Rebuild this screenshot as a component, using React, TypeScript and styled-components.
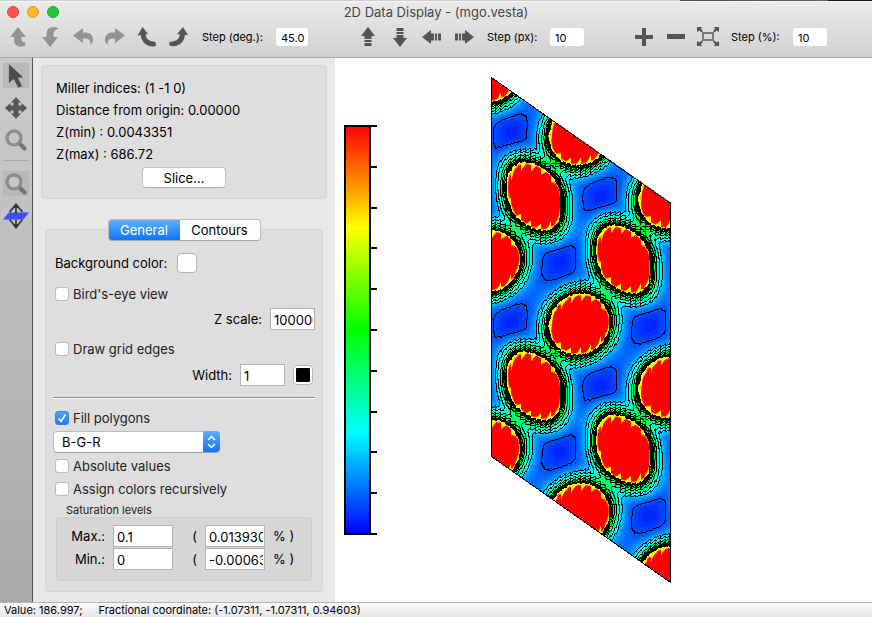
import React from "react";
import styled, { createGlobalStyle } from "styled-components";

const GlobalStyle = createGlobalStyle`
  * { box-sizing: border-box; }
  body {
    margin: 0;
    font-family: Inter, "Liberation Sans", Arial, sans-serif;
    font-size: 13px;
    color: #000;
  }
  button, input, select { font: inherit; color: inherit; margin: 0; }
`;

/* ---------- density map ---------- */

type Point = [number, number];

const MAP_W = 180;
const EDGE_DROP = 126;
const SIDE_H = 380;
const LATTICE: Point = [89.5, 63.2];
const REPEAT = 189.6;

const latticeSites = ([x0, y0]: Point): Point[] => {
  const sites: Point[] = [];
  for (let i = -2; i <= 3; i++) {
    for (let j = -4; j <= 5; j++) {
      const x = x0 + i * LATTICE[0];
      const y = y0 + i * LATTICE[1] + j * REPEAT;
      if (x > -60 && x < 240 && y > -60 && y < 570) sites.push([x, y]);
    }
  }
  return sites;
};

const hexAtoms = latticeSites([43, 119]);
const roundAtoms = latticeSites([88, 247]);
const voids = [...latticeSites([68, 185]), ...latticeSites([109, 119])];

const PROFILE: Point[] = [
  [0, 4], [25, 1.5], [28, 0.9], [29, 0.58], [33, 0.36], [37, 0.24], [41, 0.12], [45, 0.04], [50, 0.01], [53, 0],
];

const falloff = (r: number) => {
  for (let k = 1; k < PROFILE.length; k++) {
    const [r1, v1] = PROFILE[k];
    if (r < r1) {
      const [r0, v0] = PROFILE[k - 1];
      return v0 + ((v1 - v0) * (r - r0)) / (r1 - r0);
    }
  }
  return 0;
};

const density = (x: number, y: number) => {
  let base = 0.155;
  for (const [cx, cy] of voids) {
    const dx = x - cx;
    const dy = y - cy + 0.2 * dx;
    const d = Math.pow(Math.pow(Math.abs(dx) / 21, 3) + Math.pow(Math.abs(dy) / 21, 3), 1 / 3);
    base -= 0.12 * Math.exp(-0.7 * d * d);
  }
  let squares = 0;
  for (const [cx, cy] of hexAtoms) {
    const dx = x - cx;
    const dy = y - cy - 0.3 * dx;
    squares += falloff(29 * Math.pow(Math.pow(Math.abs(dx) / 26, 2.3) + Math.pow(Math.abs(dy) / 31, 2.3), 1 / 2.3)) ** 2;
  }
  for (const [cx, cy] of roundAtoms) {
    const dx = x - cx;
    const dy = y - cy + 0.1 * dx;
    squares += falloff(Math.hypot(dx, dy)) ** 2;
  }
  return base + Math.sqrt(squares);
};

const STEP_X = LATTICE[0] / 18;
const STEP_SHEAR = LATTICE[1] / 18;
const STEP_Y = REPEAT / 48;
const nodeCache = new Map<string, number>();
const node = (i: number, j: number) => {
  const key = i + "," + j;
  let v = nodeCache.get(key);
  if (v === undefined) {
    v = density(i * STEP_X, i * STEP_SHEAR + j * STEP_Y);
    nodeCache.set(key, v);
  }
  return v;
};

const interpolate = (x: number, y: number) => {
  const u = x / STEP_X;
  const w = (y - u * STEP_SHEAR) / STEP_Y;
  const i = Math.floor(u);
  const j = Math.floor(w);
  const fu = u - i;
  const fw = w - j;
  return (
    node(i, j) * (1 - fu) * (1 - fw) +
    node(i + 1, j) * fu * (1 - fw) +
    node(i, j + 1) * (1 - fu) * fw +
    node(i + 1, j + 1) * fu * fw
  );
};

const sawtooth = (t: number, height: number) => (t - Math.floor(t) - 0.5) * height;

const sample = (x: number, y: number) => {
  const plain = interpolate(x, y);
  if (plain < 0.18) return plain;
  const fine = interpolate(x, y + sawtooth(x / STEP_X, plain < 0.42 ? 2 : 4));
  if (plain < 0.68) return Math.min(fine, 0.74);
  return Math.max(0.74, Math.min(plain, interpolate(x, y + sawtooth(x / (STEP_X * 2), 12))));
};

const LEVELS = [0.08, 0.2, 0.27, 0.36, 0.43, 0.49, 0.54, 0.58, 0.62, 0.66, 0.7];
const SHADES = 80;
const bandOf = (v: number) => LEVELS.filter((l) => v > l).length;

const shadeColor = (s: number) => {
  const t = (s / SHADES) * 4;
  const up = Math.round((t % 1) * 255);
  if (t >= 4) return "#f00";
  if (t < 1) return `rgb(0,${up},255)`;
  if (t < 2) return `rgb(0,255,${255 - up})`;
  if (t < 3) return `rgb(${up},255,0)`;
  return `rgb(255,${255 - up},0)`;
};

const buildMap = () => {
  const shadePaths: string[] = Array(SHADES + 1).fill("");
  let lines = "";
  const run = (x: number, y: number, h: number) => `M${x} ${y}h1v${h}h-1z`;
  for (let x = 0; x < MAP_W; x++) {
    const top = Math.round((x * EDGE_DROP) / MAP_W);
    let start = top;
    let last = -2;
    for (let y = top; y <= top + SIDE_H; y++) {
      let shade = -2;
      if (y < top + SIDE_H) {
        const v = sample(x, y);
        const band = bandOf(v);
        const contour = band !== bandOf(sample(x + 1, y)) || band !== bandOf(sample(x, y + 1));
        shade = contour ? -1 : Math.max(0, Math.min(SHADES, Math.round(v * SHADES)));
      }
      if (shade !== last) {
        if (last === -1) lines += run(x, start, y - start);
        else if (last >= 0) shadePaths[last] += run(x, start, y - start);
        start = y;
        last = shade;
      }
    }
  }
  return { shadePaths, lines };
};

const map = buildMap();

const DensityMap = () => (
  <svg width="181" height="508" viewBox="0 0 181 508" shapeRendering="crispEdges" role="img" aria-label="Density slice">
    {map.shadePaths.map((d, s) => d && <path key={s} d={d} fill={shadeColor(s)} />)}
    <path d={map.lines} fill="#000" />
    <path d="M.5 .5L179.500 126.500V505.500L.5 379.500Z" fill="none" stroke="#000" />
  </svg>
);

const ColorScale = () => (
  <svg width="34" height="411" viewBox="0 0 34 411" shapeRendering="crispEdges" role="img" aria-label="Color scale">
    <defs>
      <linearGradient id="scale" x1="0" y1="0" x2="0" y2="1">
        <stop offset="0" stopColor="#f00" />
        <stop offset=".25" stopColor="#ff0" />
        <stop offset=".5" stopColor="#0f0" />
        <stop offset=".75" stopColor="#0ff" />
        <stop offset="1" stopColor="#00f" />
      </linearGradient>
    </defs>
    <rect x="1" y="1" width="25" height="408" fill="url(#scale)" stroke="#000" strokeWidth="2" />
    {Array.from({ length: 11 }, (_, i) => (
      <rect key={i} x="26" y={Math.round(i * 40.8)} width="7" height="2" />
    ))}
  </svg>
);

/* ---------- icons ---------- */

const Icon = ({ children, size = 22 }: { children: React.ReactNode; size?: number }) => (
  <svg width={size} height={size} viewBox="0 0 22 22" aria-hidden="true">
    {children}
  </svg>
);

const LIGHT = "#939393";
const DARK = "#555";

const RotateUp = () => (
  <Icon>
    <path d="M10 1L18 11H13.500V14Q14 16.500 17.500 16.500V19.500Q13 21.500 9.500 20Q6 18 6 14V11H2Z" fill={LIGHT} />
  </Icon>
);
const RotateDown = () => (
  <Icon>
    <path d="M10 21L2 11H6.500V7Q7 1 14 1Q17 1 19 3Q13.500 3.500 13.500 8V11H18Z" fill={LIGHT} />
  </Icon>
);
const RotateLeft = () => (
  <Icon>
    <path d="M1 9.500L11 2V6.500H14Q21 7 21 14Q21 17 18.500 18.500Q18.500 12.500 14 12.500H11V17Z" fill={LIGHT} />
  </Icon>
);
const RotateRight = () => (
  <Icon>
    <path d="M21 9.500L11 2V6.500H8Q1 7 1 14Q1 17 3.500 18.500Q3.500 12.500 8 12.500H11V17Z" fill={LIGHT} />
  </Icon>
);
const SpinLeft = () => (
  <Icon>
    <path d="M6.500 1L12 8L9.500 8.500Q10.500 15.500 19.500 16L20 20Q16 21 12 19.500Q6 17 4.500 9L1.500 9.500Z" fill={DARK} />
  </Icon>
);
const SpinRight = () => (
  <Icon>
    <path d="M15 1L20 9L17 9Q16 17 9 19.500Q5 21 1.500 19.500L1.500 16Q11 15.500 12 8.500L9 8Z" fill={DARK} />
  </Icon>
);
const MoveArrow = ({ angle }: { angle: number }) => (
  <Icon>
    <g transform={`rotate(${angle} 11 11)`} fill={DARK}>
      <path d="M11 1L18 10H14.500V13H7.500V10H4Z" />
      <path d="M7.500 14h7v2h-7zM7.500 17h7v3h-7z" />
    </g>
  </Icon>
);
const Plus = () => (
  <Icon>
    <path d="M9 2h4v7h7v4h-7v7H9v-7H2V9h7z" fill={DARK} />
  </Icon>
);
const Minus = () => (
  <Icon>
    <path d="M2 8h18v5H2z" fill={DARK} />
  </Icon>
);
const Fit = () => (
  <Icon>
    <rect x="6" y="7" width="10" height="7" fill="none" stroke="#777" strokeWidth="2" />
    <path d="M0 1h5L4 3l2 2-1.500 1.500-2-2L0 6zM22 1h-5l1 2-2 2 1.500 1.500 2-2L22 6zM0 20h5l-1-2 2-2-1.500-1.500-2 2L0 15zM22 20h-5l1-2-2-2 1.500-1.500 2 2L22 15z" fill={DARK} />
  </Icon>
);
const Pointer = () => (
  <Icon size={26}>
    <path d="M5 1L5 17L9 13.500L13 21L16 19.500L12.500 12.500L17 12Z" fill="#4c4c4c" />
  </Icon>
);
const Pan = () => (
  <Icon>
    <path d="M11 0L16 5.500H13.500V8.500H16.500V6L22 11L16.500 16V13.500H13.500V16.500H16L11 22L6 16.500H8.500V13.500H5.500V16L0 11L5.500 6V8.500H8.500V5.500H6Z" fill="#555" />
  </Icon>
);
const Magnifier = () => (
  <Icon>
    <path d="M14.500 14.500L19.500 19.500" stroke="#757575" strokeWidth="4" strokeLinecap="round" />
    <circle cx="9" cy="9" r="7" fill="#c6c6c6" stroke="#808080" strokeWidth="3" />
    <circle cx="9" cy="9" r="7" fill="none" stroke="#9c9c9c" />
  </Icon>
);
const PlaneTool = () => (
  <Icon size={26}>
    <path d="M5 8H22L17 14H0Z" fill="#3c4cff" />
    <path d="M11 2V9M5.500 7.500L11 1.500L16.500 7.500M5.500 14L11 20.500L16.500 14M11 14V20" fill="none" stroke="#383838" strokeWidth="1.500" />
    <path d="M11 0L14 4H8ZM11 22L8 18H14Z" fill="#333" />
  </Icon>
);

/* ---------- window ---------- */

const Window = styled.div`
  min-height: 100vh;
  display: flex;
  flex-direction: column;
  background: #e8e8e8;
`;

const Desktop = styled.div`
  height: 1px;
  background: linear-gradient(90deg, #cfcfcf 78%, #5a4b50 78%, #6b5d60 95%, #171923 95%);
`;

const Header = styled.header`
  height: 57px;
  background: linear-gradient(#ebebeb, #d0d0d0);
  border-top: 1px solid #f5f5f5;
  border-bottom: 1px solid #a9a9a9;
`;

const TitleBar = styled.div`
  display: grid;
  grid-template-columns: 1fr auto 1fr;
  align-items: center;
  height: 20px;
  padding: 0 7px;
`;

const Lights = styled.div`
  display: flex;
  gap: 8px;
`;

const Light = styled.button<{ $fill: string; $edge: string }>`
  width: 12px;
  height: 12px;
  padding: 0;
  border-radius: 50%;
  border: 1px solid ${(p) => p.$edge};
  background: ${(p) => p.$fill};
`;

const Title = styled.h1`
  margin: 0;
  font-size: 13px;
  font-weight: 400;
  color: #464646;
`;

const Toolbar = styled.div`
  display: flex;
  align-items: center;
  height: 30px;
  padding-left: 3px;
  font-size: 11px;
`;

const ToolGroup = styled.div`
  display: flex;
  align-items: center;
  margin-right: 44px;
`;

const IconButton = styled.button`
  display: grid;
  place-items: center;
  width: 32px;
  height: 26px;
  padding: 0;
  border: 0;
  background: none;
`;

const StepLabel = styled.label<{ $width: number }>`
  width: ${(p) => p.$width}px;
  margin-left: 7px;
`;

const StepInput = styled.input<{ $width: number }>`
  width: ${(p) => p.$width}px;
  height: 18px;
  padding: 1px 3px 0 5px;
  border: 0;
  border-radius: 3px;
  background: #fff;
`;

const Main = styled.main`
  flex: 1;
  display: flex;
`;

const SideTools = styled.nav`
  display: flex;
  flex-direction: column;
  align-items: center;
  gap: 7px;
  width: 33px;
  padding: 5px 1px 0 0;
  background: linear-gradient(#cbcbcb, #a9a9a9);
  border-right: 1px solid #555;
`;

const SideButton = styled.button<{ $active?: boolean }>`
  display: grid;
  place-items: center;
  width: 26px;
  height: 25px;
  padding: 0;
  border: 0;
  background: ${(p) => (p.$active ? "#b8b8b8" : "none")};
`;

const SideRule = styled.hr`
  width: 26px;
  height: 1px;
  margin: 1px 0 3px;
  border: 0;
  background: #a6a6a6;
`;

const Panel = styled.section`
  flex: none;
  display: flex;
  flex-direction: column;
  width: 302px;
  padding: 7px 8px 10px;
`;

const InfoBox = styled.div`
  height: 134px;
  padding: 11px 14px 0;
  border: 1px solid #d5d5d5;
  border-radius: 4px;
  background: #dedede;
  line-height: 22px;
`;

const InfoLine = styled.p`
  margin: 0;
`;

const SliceButton = styled.button`
  display: block;
  width: 84px;
  height: 21px;
  margin: 2px auto 0;
  padding: 0;
  border: 1px solid #c4c4c4;
  border-bottom-color: #a8a8a8;
  border-radius: 4px;
  background: #fff;
  line-height: 18px;
`;

const Tabs = styled.div`
  z-index: 1;
  display: flex;
  align-self: center;
  height: 22px;
  margin: 20px 0 -12px;
  border: 1px solid #bdbdbd;
  border-bottom-color: #a5a5a5;
  border-radius: 4px;
  overflow: hidden;
`;

const Tab = styled.button<{ $active?: boolean }>`
  width: ${(p) => (p.$active ? 71 : 80)}px;
  padding: 0;
  border: 0;
  color: ${(p) => (p.$active ? "#fff" : "#000")};
  background: ${(p) => (p.$active ? "linear-gradient(#5fb0fc, #0e74fd)" : "#fff")};
`;

const Settings = styled.div`
  height: 363px;
  margin: 0 4px;
  padding: 18px 7px 0;
  border: 1px solid #d5d5d5;
  border-radius: 4px;
  background: #dedede;
`;

const Row = styled.div<{ $top?: number; $end?: boolean }>`
  display: flex;
  align-items: center;
  justify-content: ${(p) => (p.$end ? "flex-end" : "flex-start")};
  gap: 8px;
  height: 24px;
  margin-top: ${(p) => p.$top ?? 0}px;
`;

const BackgroundRow = styled(Row)`
  gap: 10px;
  height: 30px;
  padding-left: 2px;
`;

const Swatch = styled.button<{ $color: string; $inset?: boolean }>`
  width: 20px;
  height: 20px;
  margin-right: ${(p) => (p.$inset ? 2 : 0)}px;
  padding: 2px;
  border: 1px solid #b4b4b4;
  border-radius: 4px;
  background: linear-gradient(${(p) => p.$color}, ${(p) => p.$color}) content-box, #fff;
`;

const TextInput = styled.input<{ $width: number }>`
  width: ${(p) => p.$width}px;
  height: 22px;
  padding: 2px 1px 0 3px;
  border: 1px solid #b3b3b3;
  border-radius: 0;
  background: #fff;
`;

const CheckLabel = styled.label`
  display: flex;
  align-items: center;
  gap: 4px;
  padding-left: 2px;
  color: #222;
`;

const CheckFrame = styled.span`
  display: grid;
  > * { grid-area: 1 / 1; }
  svg { pointer-events: none; }
`;

const CheckInput = styled.input`
  appearance: none;
  width: 14px;
  height: 14px;
  border: 1px solid #b9b9b9;
  border-radius: 3px;
  background: #fff;
  &:checked { border-color: #2f86ea; background: linear-gradient(#4da4fb, #1f7cf6); }
`;

const Rule = styled.hr`
  height: 2px;
  margin: 10px 0 7px;
  border: 0;
  border-top: 1px solid #8e8e8e;
  background: #fff;
`;

const SelectFrame = styled.div`
  display: grid;
  width: 167px;
  height: 22px;
  margin: 1px 0 1px;
  > * { grid-area: 1 / 1; }
  svg { justify-self: end; pointer-events: none; }
`;

const Select = styled.select`
  appearance: none;
  padding: 0 24px 0 8px;
  border: 1px solid #bcbcbc;
  border-bottom-color: #a0a0a0;
  border-radius: 4px;
  background: #fff;
`;

const TightRow = styled(Row)`
  height: 23px;
`;

const Caption = styled.div`
  margin: 3px 0 0 13px;
  font-size: 11px;
  line-height: 14px;
  color: #222;
`;

const Levels = styled.div`
  display: grid;
  grid-template-columns: 48px 60px 16px 60px auto;
  align-content: start;
  align-items: center;
  column-gap: 8px;
  row-gap: 1px;
  height: 64px;
  margin: 0 3px;
  padding-top: 7px;
  border: 1px solid #cdcdcd;
  border-radius: 4px;
  background: #d6d6d6;
`;

const LevelName = styled.label`
  justify-self: end;
`;

const Paren = styled.span`
  justify-self: end;
`;

const Canvas = styled.section`
  flex: 1;
  display: flex;
  align-items: flex-start;
  gap: 113px;
  padding: 19px 0 0 9px;
  background: #fff;
  > svg { flex: none; display: block; }
  > svg:first-child { margin-top: 48px; }
`;

const Status = styled.footer`
  display: flex;
  align-items: center;
  gap: 16px;
  height: 15px;
  padding-left: 4px;
  border-top: 1px solid #b5b5b5;
  background: linear-gradient(#fafafa, #e6e6e6);
  font-size: 11px;
  line-height: 14px;
`;

const Check = ({ label, checked }: { label: string; checked?: boolean }) => (
  <CheckLabel>
    <CheckFrame>
      <CheckInput type="checkbox" defaultChecked={checked} />
      {checked && (
        <svg width="14" height="14" viewBox="0 0 14 14" aria-hidden="true">
          <path d="M3.500 7.500L6 10.500L10.500 3.500" fill="none" stroke="#fff" strokeWidth="1.500" />
        </svg>
      )}
    </CheckFrame>
    {label}
  </CheckLabel>
);

type Tool = { name: string; icon: React.ReactNode };
type Group = { id: string; label: string; value: string; width: number; field: number; tools: Tool[] };

const groups: Group[] = [
  {
    id: "step-deg", label: "Step (deg.):", value: "45.0", width: 74, field: 32,
    tools: [
      { name: "Rotate up", icon: <RotateUp /> },
      { name: "Rotate down", icon: <RotateDown /> },
      { name: "Rotate left", icon: <RotateLeft /> },
      { name: "Rotate right", icon: <RotateRight /> },
      { name: "Spin left", icon: <SpinLeft /> },
      { name: "Spin right", icon: <SpinRight /> },
    ],
  },
  {
    id: "step-px", label: "Step (px):", value: "10", width: 63, field: 34,
    tools: [
      { name: "Move up", icon: <MoveArrow angle={0} /> },
      { name: "Move down", icon: <MoveArrow angle={180} /> },
      { name: "Move left", icon: <MoveArrow angle={270} /> },
      { name: "Move right", icon: <MoveArrow angle={90} /> },
    ],
  },
  {
    id: "step-pct", label: "Step (%):", value: "10", width: 62, field: 34,
    tools: [
      { name: "Zoom in", icon: <Plus /> },
      { name: "Zoom out", icon: <Minus /> },
      { name: "Fit to window", icon: <Fit /> },
    ],
  },
];

export default function App() {
  return (
    <Window>
      <GlobalStyle />
      <Desktop />
      <Header>
        <TitleBar>
          <Lights>
            <Light aria-label="Close" $fill="#ff5148" $edge="#e2443c" />
            <Light aria-label="Minimize" $fill="#ffb429" $edge="#dc9b20" />
            <Light aria-label="Zoom" $fill="#25c43a" $edge="#1fa931" />
          </Lights>
          <Title>2D Data Display - (mgo.vesta)</Title>
        </TitleBar>
        <Toolbar>
          {groups.map((g) => (
            <ToolGroup key={g.id}>
              {g.tools.map((t) => (
                <IconButton key={t.name} aria-label={t.name}>{t.icon}</IconButton>
              ))}
              <StepLabel htmlFor={g.id} $width={g.width}>{g.label}</StepLabel>
              <StepInput id={g.id} defaultValue={g.value} $width={g.field} />
            </ToolGroup>
          ))}
        </Toolbar>
      </Header>
      <Main>
        <SideTools>
          <SideButton aria-label="Select" $active><Pointer /></SideButton>
          <SideButton aria-label="Translate"><Pan /></SideButton>
          <SideButton aria-label="Magnify"><Magnifier /></SideButton>
          <SideRule />
          <SideButton aria-label="Inspect" $active><Magnifier /></SideButton>
          <SideButton aria-label="Lattice plane"><PlaneTool /></SideButton>
        </SideTools>
        <Panel>
          <InfoBox>
            <InfoLine>Miller indices: (1 -1 0)</InfoLine>
            <InfoLine>Distance from origin: 0.00000</InfoLine>
            <InfoLine>Z(min) : 0.0043351</InfoLine>
            <InfoLine>Z(max) : 686.72</InfoLine>
            <SliceButton>Slice...</SliceButton>
          </InfoBox>
          <Tabs role="tablist">
            <Tab role="tab" aria-selected="true" $active>General</Tab>
            <Tab role="tab" aria-selected="false">Contours</Tab>
          </Tabs>
          <Settings>
            <BackgroundRow>
              <label htmlFor="background">Background color:</label>
              <Swatch id="background" $color="#fff" />
            </BackgroundRow>
            <Row $top={4}><Check label="Bird's-eye view" /></Row>
            <Row $top={1} $end>
              <label htmlFor="zscale">Z scale:</label>
              <TextInput id="zscale" defaultValue="10000000" $width={45} />
            </Row>
            <Row $top={6}><Check label="Draw grid edges" /></Row>
            <Row $top={2} $end>
              <label htmlFor="line-width">Width:</label>
              <TextInput id="line-width" defaultValue="1" $width={45} />
              <Swatch aria-label="Grid edge color" $color="#000" $inset />
            </Row>
            <Rule />
            <Row><Check label="Fill polygons" checked /></Row>
            <SelectFrame>
              <Select aria-label="Color scheme" defaultValue="B-G-R">
                <option>B-G-R</option>
              </Select>
              <svg width="17" height="22" viewBox="0 0 17 22" aria-hidden="true">
                <defs>
                  <linearGradient id="stepper" x1="0" y1="0" x2="0" y2="1">
                    <stop offset="0" stopColor="#5fb0fc" />
                    <stop offset="1" stopColor="#0e74fd" />
                  </linearGradient>
                </defs>
                <path d="M0 0H13Q17 0 17 4V17Q17 21 13 21H0Z" fill="url(#stepper)" />
                <path d="M5 9L8.500 5.500L12 9M5 13L8.500 16.500L12 13" fill="none" stroke="#fff" strokeWidth="1.500" />
              </svg>
            </SelectFrame>
            <TightRow><Check label="Absolute values" /></TightRow>
            <TightRow><Check label="Assign colors recursively" /></TightRow>
            <Caption>Saturation levels</Caption>
            <Levels>
              <LevelName htmlFor="max">Max.:</LevelName>
              <TextInput id="max" defaultValue="0.1" $width={60} />
              <Paren>(</Paren>
              <TextInput aria-label="Max. percent" defaultValue="0.0139300" $width={60} />
              <span>% )</span>
              <LevelName htmlFor="min">Min.:</LevelName>
              <TextInput id="min" defaultValue="0" $width={60} />
              <Paren>(</Paren>
              <TextInput aria-label="Min. percent" defaultValue="-0.00063127" $width={60} />
              <span>% )</span>
            </Levels>
          </Settings>
        </Panel>
        <Canvas>
          <ColorScale />
          <DensityMap />
        </Canvas>
      </Main>
      <Status>
        <span>Value: 186.997;</span>
        <span>Fractional coordinate: (-1.07311, -1.07311, 0.94603)</span>
      </Status>
    </Window>
  );
}
